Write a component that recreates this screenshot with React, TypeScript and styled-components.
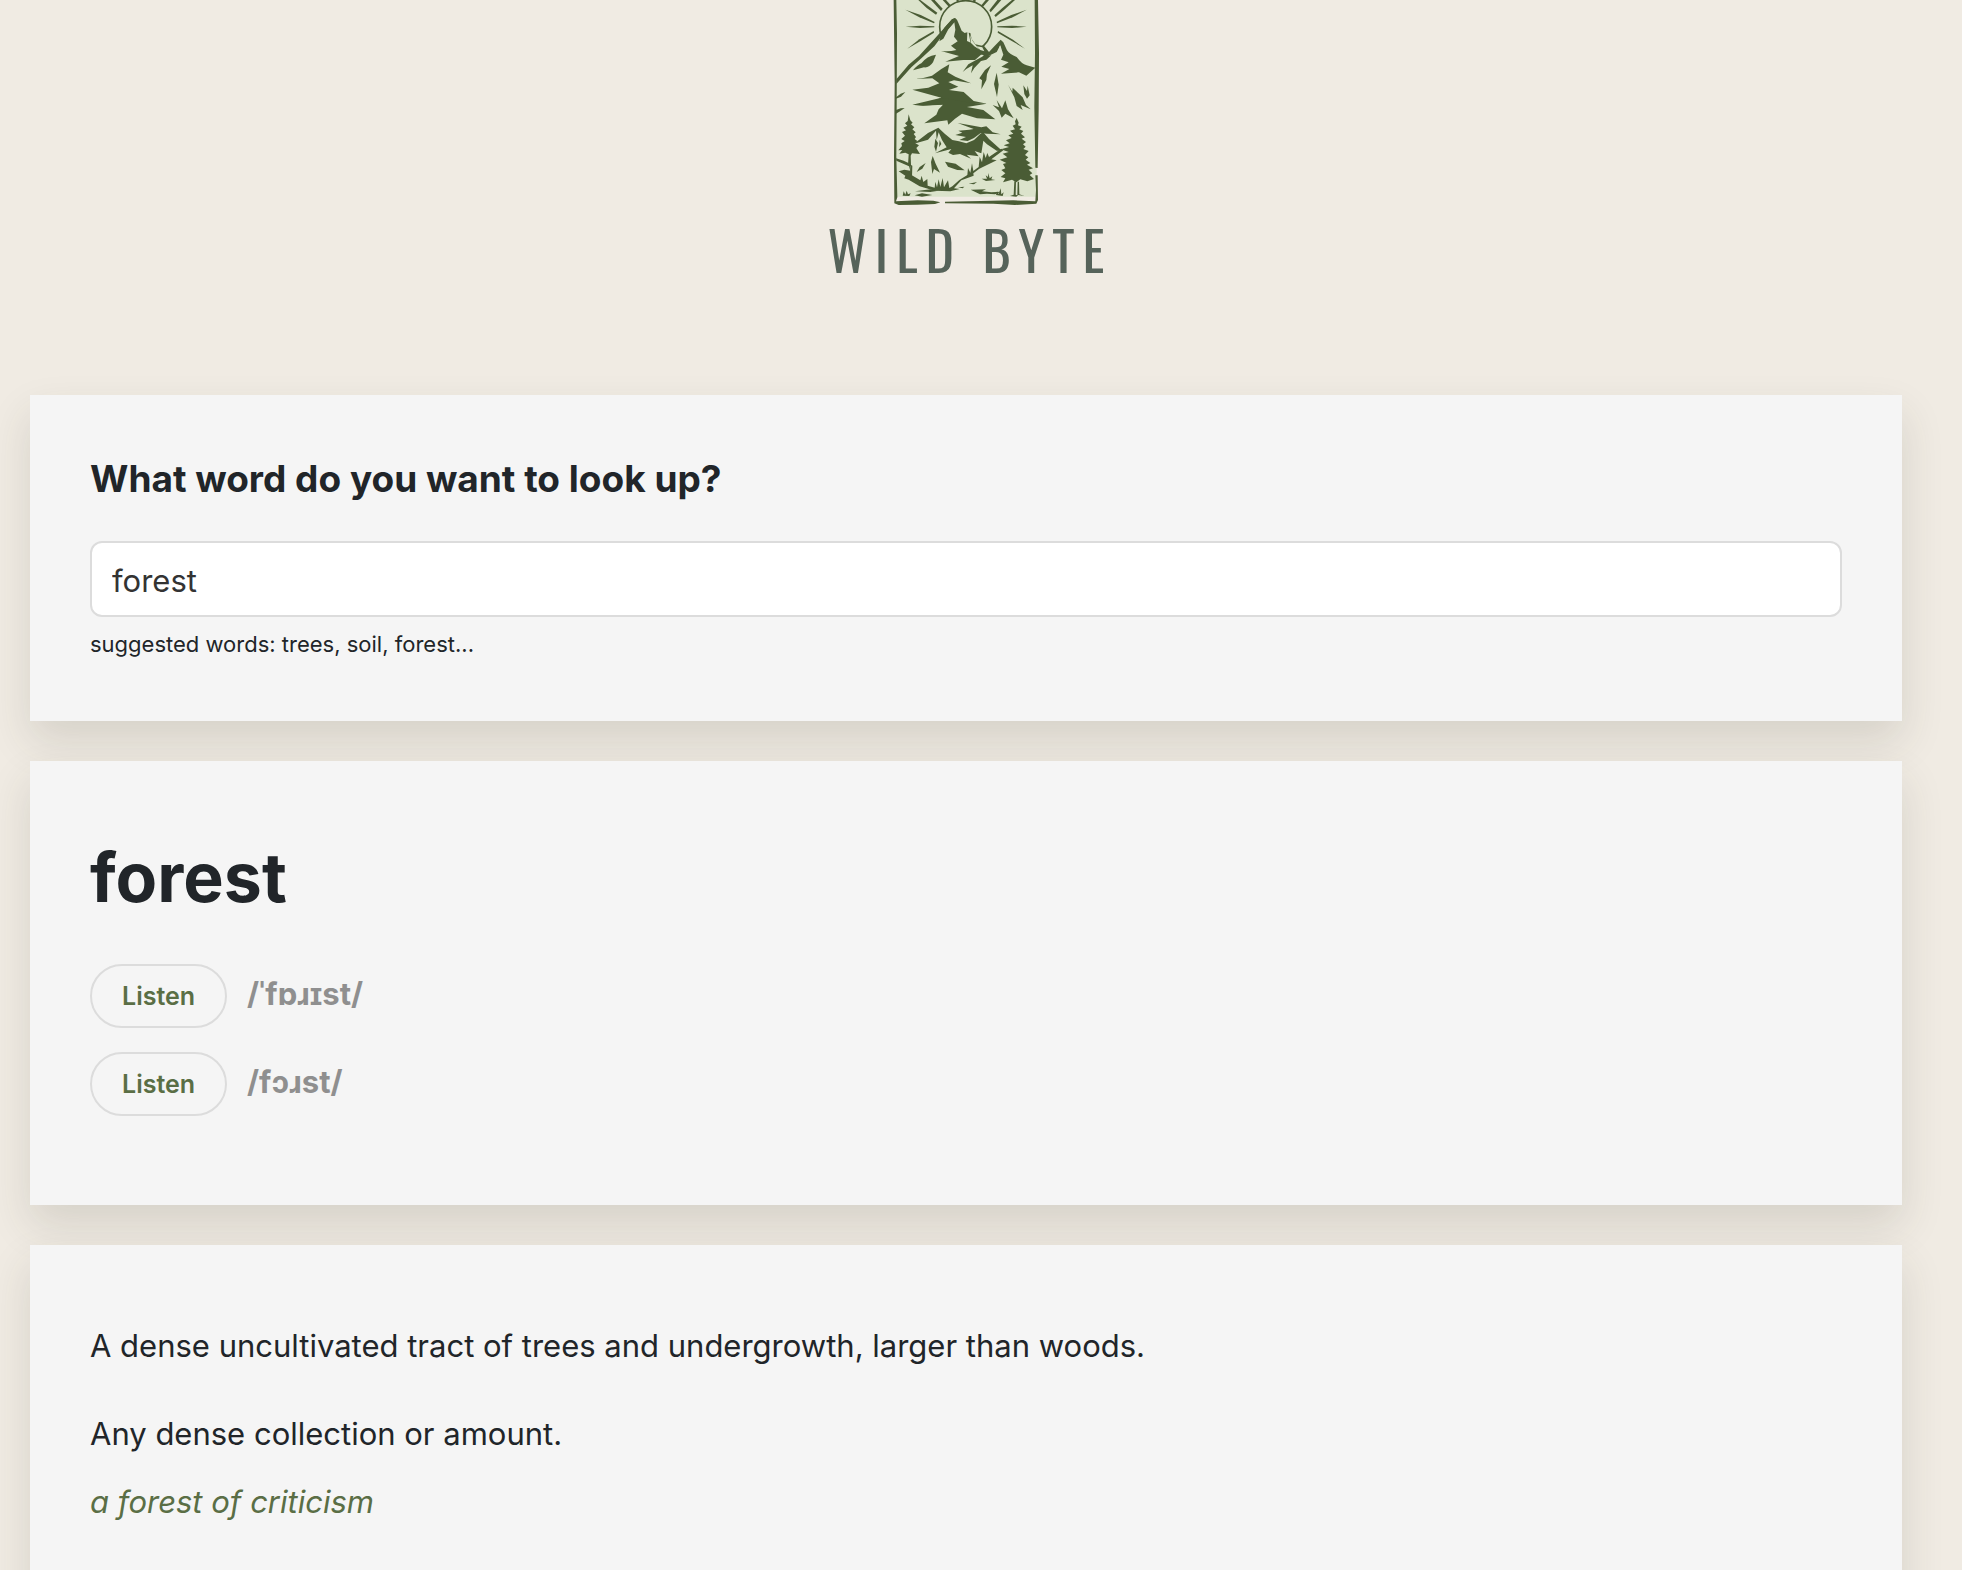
import React, { useState } from "react";
import styled, { createGlobalStyle } from "styled-components";

const colors = {
  page: "#f0ebe3",
  card: "#f5f5f5",
  ink: "#212529",
  moss: "#5a6e45",
  line: "#dcdcdc",
  muted: "#8f8f8f",
  pine: "#4a5c35",
  leaf: "#dbe3cb",
  wordmark: "#56635a",
};

const GlobalStyle = createGlobalStyle`
  *, *::before, *::after { box-sizing: border-box; }
  body {
    margin: 0;
    background: ${colors.page};
    color: ${colors.ink};
    font-family: Inter, "Liberation Sans", sans-serif;
    font-size: 31px;
    line-height: 48px;
  }
`;

const Page = styled.div`
  padding: 0 60px 0 30px;
`;

const Header = styled.header`
  display: flex;
  flex-direction: column;
  align-items: center;
  padding-bottom: 110px;
`;

const Emblem = styled.svg`
  display: block;
  width: 147px;
  height: 205px;
`;

const Wordmark = styled.span`
  margin-top: 8px;
  padding-left: 8px;
  font-family: Oswald, "Roboto Condensed", Roboto, sans-serif;
  font-size: 54px;
  line-height: 72px;
  letter-spacing: 8px;
  color: ${colors.wordmark};
`;

const Main = styled.main`
  display: flex;
  flex-direction: column;
  gap: 40px;
`;

const Card = styled.section`
  padding: 60px;
  background: ${colors.card};
  box-shadow: 0 20px 40px rgba(55, 58, 40, 0.14);
`;

const Question = styled.label`
  display: block;
  margin-bottom: 38px;
  font-size: 37px;
  line-height: 48px;
  font-weight: 700;
`;

const WordInput = styled.input`
  display: block;
  width: 100%;
  height: 76px;
  padding: 2px 20px 0;
  border: 2px solid ${colors.line};
  border-radius: 12px;
  background: #fff;
  color: #333;
  font: inherit;
  outline: none;
`;

const Hint = styled.p`
  margin: 10px 0 0;
  font-size: 22px;
  line-height: 34px;
`;

const Word = styled.h1`
  margin: 14px 0 45px;
  font-size: 68px;
  line-height: 84px;
  font-weight: 700;
`;

const Phonetics = styled.ul`
  display: flex;
  flex-direction: column;
  gap: 24px;
  margin: 0;
  padding: 0 0 29px;
  list-style: none;
`;

const Phonetic = styled.li`
  display: flex;
  align-items: baseline;
  gap: 20px;
`;

const ListenButton = styled.button`
  height: 64px;
  padding: 0 30px;
  border: 2px solid ${colors.line};
  border-radius: 32px;
  background: transparent;
  color: ${colors.moss};
  font: inherit;
  font-size: 25px;
  font-weight: 600;
  cursor: pointer;
`;

const Transcription = styled.span`
  color: ${colors.muted};
  font-weight: 700;
`;

const Definition = styled.div`
  display: flex;
  flex-direction: column;
  gap: 20px;
  padding-bottom: 40px;

  &:first-child {
    padding-top: 17px;
  }
`;

const Meaning = styled.p`
  margin: 0;
`;

const Example = styled(Meaning)`
  color: ${colors.moss};
  font-style: italic;
`;

const rays = [
  "M77 80L120 77L163 79L163 82L120 84Z",
  "M76 29L122 45L164 66L162 70L118 52Z",
  "M82 146L118 118L161 93L162 98L122 123Z",
  "M115 0L121 0L172 38L168 44L140 24Z",
  "M153 0L164 0L188 26L183 33Z",
  "M188 0L198 0L211 14L207 21Z",
  "M229 0L236 0L236 6L231 6Z",
  "M279 0L287 0L286 7L281 7Z",
  "M317 0L327 0L309 20L304 16Z",
  "M352 0L364 0L332 37L328 31Z",
  "M396 0L405 0L372 30L347 51L343 46L368 23Z",
  "M440 29L394 45L350 65L351 70L398 52Z",
  "M440 80L396 77L352 79L352 82L396 84Z",
  "M435 146L399 119L354 93L353 98L394 122Z",
];

const upperRocks = [
  "M225 54Q232 58 235 68L245 92L254 99L262 97L261 123Q277 129 291 140L321 157L328 166L303 164L285 180L250 180L196 185L237 168L183 153Q210 155 229 150L213 137L233 124L222 110L226 89L223 67L205 88L190 116L178 124L184 101L193 83L216 58Z",
  "M266 98L271 99L275 117L286 133L313 139L327 156L343 139L362 119L370 127L381 151Q389 163 410 171Q425 192 440 196L466 203L439 227L417 217L363 221L388 207L364 200L386 187L363 179L370 164L361 136L350 156L325 168L320 176L300 182L311 166L299 151L272 130Z",
  "M99 211Q113 194 124 190Q140 168 168 164L159 187Q148 204 132 202Z",
  "M105 237Q135 234 156 227L184 207L208 193L203 217L226 230L273 250L222 241L205 246L235 260L207 270L251 276L281 303L321 311L270 310L238 330L176 330L189 314L123 317L184 293L97 269L145 263L178 250L157 235Z",
  "M248 216L265 193L287 181L312 167L334 166L319 179L303 183L283 204L273 220L278 196L259 207Z",
  "M304 268L306 241L298 235L315 210L333 196L321 222L319 240Z",
  "M350 218L356 254L351 291L342 252Z",
  "M384 254L397 275L398 263L428 292L438 315L452 328L422 315L428 330L410 318L403 292Z",
  "M430 256L441 273L443 257L449 286L441 296L433 282Z",
  "M48 292L62 281L76 276L63 290L48 296Z",
];

const lowerRocks = [
  "M176 328L192 313L123 317L97 314L184 293L270 308L320 311L261 321L310 330L346 358L291 355L246 341L225 356L205 374L202 361L133 370L169 344Z",
  "M338 315L357 322L350 300L366 325L376 301L384 328L401 355L376 341L365 353L357 333Z",
  "M48 330L62 325L74 324L60 334L48 341Z",
  "M233 369L280 377L304 382L319 379L338 397L362 403L320 401L302 399L282 414L263 423L238 420L258 411L226 405L247 398L235 392L268 389L281 387Z",
  "M102 431L144 399L175 383L195 402L217 420L237 424L259 430L282 420L303 400L311 398L327 417L367 453L350 452L321 433L310 422L304 460L284 453L296 469L260 464L273 476L240 462L219 465L205 458L214 447L165 460L200 442L186 420L176 397L170 420L168 392L144 419Z",
  "M166 416L174 429L168 455L163 440ZM179 420L184 432L177 442Z",
  "M110 516L119 501L137 489L127 506Z",
  "M158 468L167 491L180 518L162 507L157 522L153 486Z",
  "M195 485L227 491L254 511L232 510L204 500Z",
];

const ground = [
  "M48 475L71 482L90 491L93 524L121 541L125 527L130 546L142 537L143 557L164 563L166 545L171 562L176 538L181 561L188 534L192 562L204 541L208 564L217 559L238 540L262 525L264 504L271 518L276 490L280 513L296 501L299 470L306 487L311 456L317 474L322 459L327 471L349 456L364 446L370 451L334 478L350 481L298 506L280 520L281 527L244 541L222 565L239 567L211 574L164 572L119 559L86 539L73 535L76 527L56 514L73 509L91 512L87 499L49 482Z",
  "M234 562L253 560L248 565ZM105 574L152 568L175 572L151 576ZM272 569L318 568L306 574L334 577L364 575L345 583L321 581L300 583Z",
  "M68 587L71 574L76 584L80 572L84 583L92 580L88 588ZM104 586L126 580L157 585L126 590Z",
  "M305 536L321 536L317 526L324 531L325 519L329 535L337 529L334 538L346 540L318 543ZM348 585L351 574L356 582L362 565L364 583L371 577L368 588Z",
  "M266 551L291 546L282 553ZM390 588L401 584L403 544L408 544L407 584L412 586L413 545L417 545L418 583L433 588L415 585L409 590Z",
];

const trees = [
  "M86 343L91 361L98 368L93 373L103 382L97 388L107 397L101 402L108 411L104 417L112 423L106 430L117 436L109 444L120 462L96 460L92 467L93 495L97 497L96 532L90 531L91 499L84 496L86 463L76 458L58 461L67 450L55 451L66 438L64 430L74 423L64 417L75 407L66 396L78 391L70 383L82 377L75 370L83 363Z",
  "M410 354L416 368L414 376L425 380L418 388L430 393L423 401L435 412L425 416L438 426L429 433L437 440L430 447L446 453L435 465L445 472L437 479L451 489L441 494L459 505L446 509L457 520L449 525L462 537L442 544L421 538L409 547L396 539L369 547L376 535L362 531L376 520L364 510L376 505L369 492L379 489L359 479L382 472L368 461L386 456L363 448L387 441L371 436L389 430L378 421L395 414L385 406L400 401L390 392L405 388L398 377L407 373L405 364Z",
];

const frame = [
  "M41 0H49L51 100L50 330L49 470L52 592L48 604L113 601L160 602L181 607L165 612L111 614L56 615L43 610L42 470L44 250Z",
  "M464 0H474L477 160L476 330L473 504L466 503L463 320L465 160Z",
  "M466 526L473 526L474 600L469 611L405 615L340 611L195 610V605L303 603L400 601L466 604L468 570Z",
];

function Logo() {
  return (
    <Emblem viewBox="39 0 441 615" role="img" aria-label="Mountain landscape with sun and pine trees">
      <path fill={colors.leaf} d="M46 0H470V590H46Z" />
      <circle cx="257" cy="80" r="78" fill="none" stroke={colors.pine} strokeWidth="5" />
      <path
        fill={colors.leaf}
        d="M48 245L180 103L225 58L262 100L290 136L325 155L362 121L410 172L464 205V330H48Z"
      />
      <g fill={colors.pine}>
        {[...rays, ...upperRocks, ...lowerRocks, ...ground, ...trees, ...frame].map((d) => (
          <path key={d} d={d} />
        ))}
        <path d="M49 238L86 194L117 168L180 98L216 58L226 54L223 66L186 108L163 139L125 174L94 202L49 252Z" />
      </g>
      <g fill={colors.leaf}>
        <path d="M270 104L278 123L287 135L299 149L283 139L273 129Z" />
        <path d="M290 139L307 142L313 154L301 150Z" />
        <path d="M360 136L352 158L331 175L345 172L356 180L363 156Z" />
      </g>
    </Emblem>
  );
}

const phonetics = ["/ˈfɒɹɪst/", "/fɔɹst/"];

const definitions = [
  { meaning: "A dense uncultivated tract of trees and undergrowth, larger than woods." },
  { meaning: "Any dense collection or amount.", example: "a forest of criticism" },
];

export default function App() {
  const [keyword, setKeyword] = useState("forest");

  return (
    <>
      <GlobalStyle />
      <Page>
        <Header>
          <Logo />
          <Wordmark>WILD BYTE</Wordmark>
        </Header>
        <Main>
          <Card as="form" onSubmit={(event: React.FormEvent) => event.preventDefault()}>
            <Question htmlFor="keyword">What word do you want to look up?</Question>
            <WordInput
              id="keyword"
              type="text"
              value={keyword}
              onChange={(event) => setKeyword(event.target.value)}
            />
            <Hint>suggested words: trees, soil, forest...</Hint>
          </Card>
          <Card>
            <Word>forest</Word>
            <Phonetics>
              {phonetics.map((text) => (
                <Phonetic key={text}>
                  <ListenButton type="button">Listen</ListenButton>
                  <Transcription>{text}</Transcription>
                </Phonetic>
              ))}
            </Phonetics>
          </Card>
          <Card>
            {definitions.map(({ meaning, example }) => (
              <Definition key={meaning}>
                <Meaning>{meaning}</Meaning>
                {example && <Example>{example}</Example>}
              </Definition>
            ))}
          </Card>
        </Main>
      </Page>
    </>
  );
}
